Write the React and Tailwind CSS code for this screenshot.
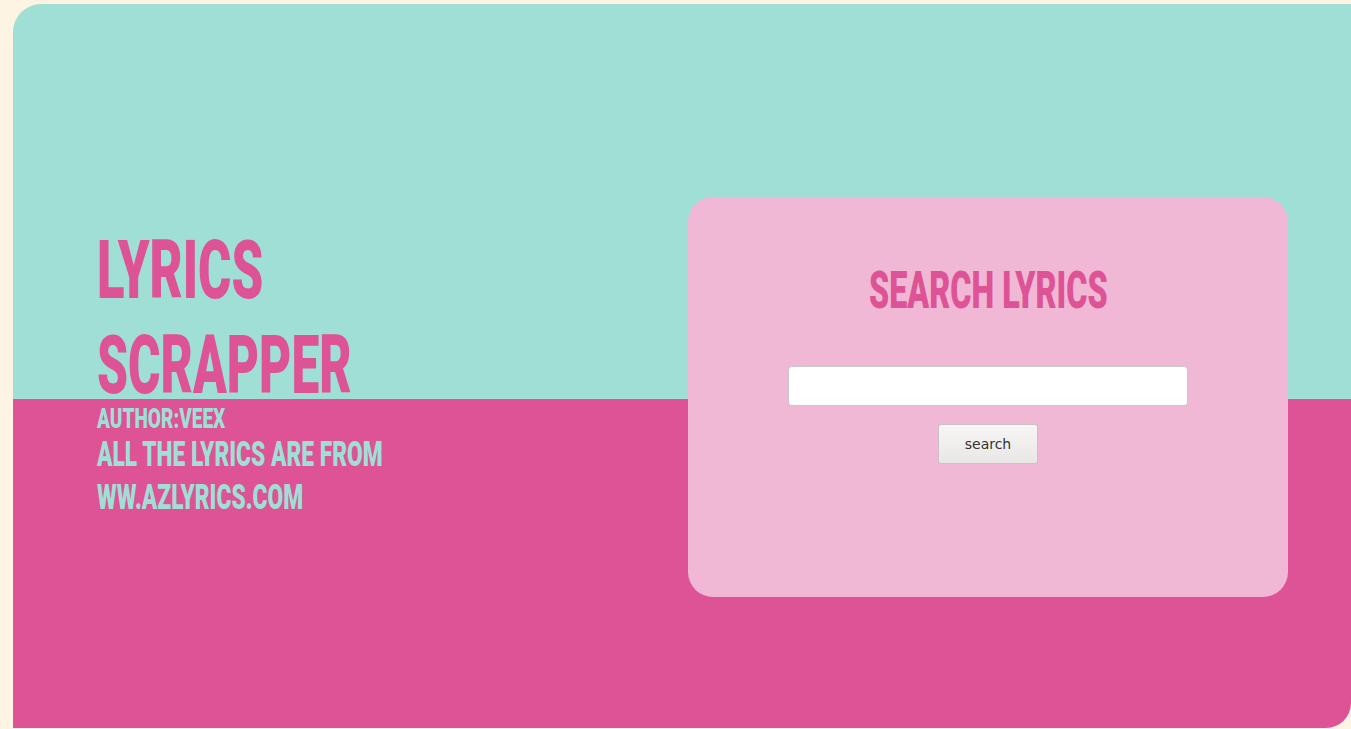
export default function App() {
  return (
    <div className="min-h-[729px] bg-[#fef4e4] pt-[4px] pl-[13px]">
      <div className="flex h-[724px] w-[1338px] rounded-tl-[28px] rounded-br-[25px] bg-[linear-gradient(to_bottom,#a0dfd5_395px,#de5396_395px)] pl-[84px] font-['Roboto',sans-serif] font-black uppercase">
        <div className="w-[591px] pt-[219px]">
          <h1 className="text-[#de5396]">
            <span className="block origin-left scale-x-[0.62] text-[82px] leading-[95px]">Lyrics</span>
            <span className="mt-[10px] block origin-left scale-x-[0.605] text-[82px] leading-[74px]">Scrapper</span>
          </h1>
          <p className="mt-[2px] origin-left scale-x-[0.68] text-[28px] leading-[29px] text-[#a0dfd5]">
            Author:Veex
          </p>
          <p className="text-[35px] leading-[43px] text-[#a0dfd5]">
            <span className="block origin-left scale-x-[0.65]">All the lyrics are from</span>
            <span className="block origin-left scale-x-[0.65]">ww.azlyrics.com</span>
          </p>
        </div>
        <div className="mt-[193px] flex h-[400px] w-[600px] flex-col items-center rounded-[25px] bg-[#f0b8d5] pt-[64px]">
          <h2 className="scale-x-[0.62] text-[52px] leading-[60px] text-[#de5396]">Search Lyrics</h2>
          <input
            type="text"
            className="mt-[45px] h-[40px] w-[400px] rounded-[4px] border border-[#c8c8c8] bg-white px-2 font-['DejaVu_Sans',sans-serif] text-[14px] font-normal normal-case outline-none"
          />
          <button className="mt-[18px] h-[40px] w-[100px] rounded-[3px] border border-[#c4c4c4] bg-[linear-gradient(to_bottom,#f7f6f5,#e9e7e5)] font-['DejaVu_Sans',sans-serif] text-[14px] font-normal normal-case text-[#333333]">
            search
          </button>
        </div>
      </div>
    </div>
  );
}
